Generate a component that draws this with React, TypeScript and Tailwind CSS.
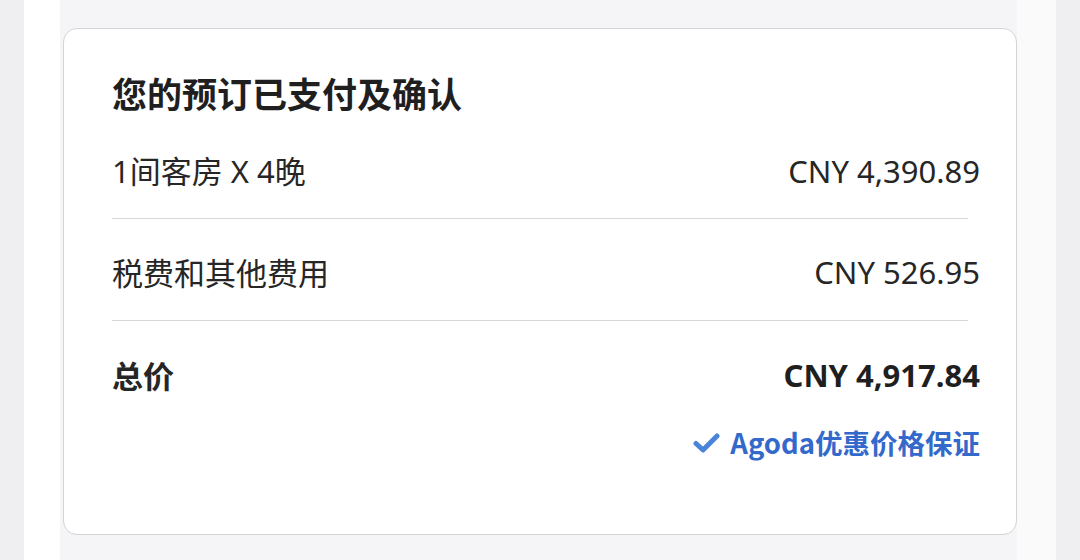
import React from "react";

const cjk = { fontFamily: '"Noto Sans CJK SC", "Noto Sans", sans-serif' };
const num = { fontFamily: '"Noto Sans", "Noto Sans CJK SC", sans-serif' };

export default function App() {
  return (
    <div className="w-[1080px] h-[560px] overflow-hidden flex bg-[#efeff1]">
      <div className="w-[24px] shrink-0 bg-[#efeff1]" />
      <div className="w-[36px] shrink-0 bg-white" />
      <div className="w-[957px] shrink-0 bg-[#f5f5f7] pt-[28px] pl-[3px]">
        <div className="h-[507px] w-[954px] rounded-[14px] border border-[#d4d4d6] bg-white pl-[48px] pr-[36px] pt-[44px] text-[#262626]">
          <div style={cjk} className="text-[35px] leading-[40px] font-bold text-[#1f1f1f]">
            您的预订已支付及确认
          </div>
          <div className="mt-[38px] flex items-center justify-between h-[40px]">
            <span style={num} className="text-[31px]">1间客房 X 4晚</span>
            <span style={num} className="text-[31px]">CNY 4,390.89</span>
          </div>
          <div className="mt-[27px] mr-[12px] h-px bg-[#d6d6d6]" />
          <div className="mt-[33px] flex items-center justify-between h-[40px]">
            <span style={cjk} className="text-[31px]">税费和其他费用</span>
            <span style={num} className="text-[31px]">CNY 526.95</span>
          </div>
          <div className="mt-[28px] mr-[12px] h-px bg-[#d6d6d6]" />
          <div className="mt-[34px] flex items-center justify-between h-[40px]">
            <span style={cjk} className="text-[31px] font-bold">总价</span>
            <span style={num} className="text-[31px] font-bold text-[#1f1f1f]">CNY 4,917.84</span>
          </div>
          <div className="mt-[30px] flex items-center justify-end h-[36px]">
            <svg width="27" height="22" viewBox="0 0 27 22" className="mr-[10px]">
              <path d="M3 11.5 L10 18 L24 4" fill="none" stroke="#4a84d8" strokeWidth="5" strokeLinecap="round" strokeLinejoin="round" />
            </svg>
            <span style={cjk} className="text-[27.5px] font-bold text-[#3469cc]">Agoda优惠价格保证</span>
          </div>
        </div>
      </div>
      <div className="w-[39px] shrink-0 bg-[#fafafb]" />
    </div>
  );
}
